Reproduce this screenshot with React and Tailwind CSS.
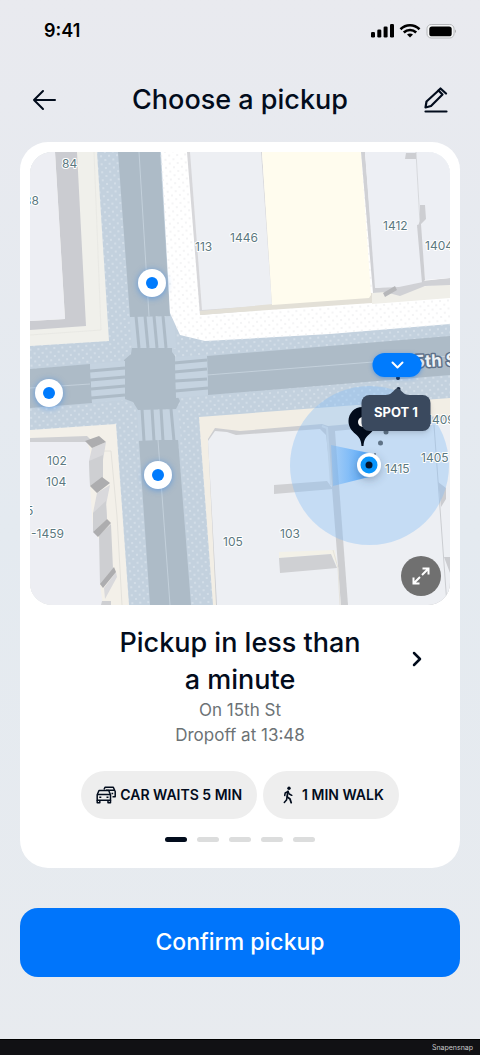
import { useState } from 'react';

const SPOTS = [
  { id: 2, x: 152, y: 282 },
  { id: 3, x: 49, y: 392 },
  { id: 4, x: 158, y: 474 }
];

const LABELS = [
  { text: '84', x: 62, y: 167 },
  { text: '38', x: 24, y: 204 },
  { text: '113', x: 195, y: 250 },
  { text: '1446', x: 230, y: 241 },
  { text: '1412', x: 383, y: 229 },
  { text: '1404', x: 425, y: 249 },
  { text: '102', x: 47, y: 464 },
  { text: '104', x: 46, y: 485 },
  { text: '5', x: 26, y: 514 },
  { text: '-1459', x: 31, y: 537 },
  { text: '105', x: 223, y: 545 },
  { text: '103', x: 280, y: 537 },
  { text: '1409', x: 427, y: 423 },
  { text: '1405', x: 421, y: 461 },
  { text: '1415', x: 385, y: 472 }
];

// map drawing space starts at (30, 151) and is 420 x 453
const place = (x, y) => ({ left: `${((x - 30) / 420) * 100}%`, top: `${((y - 151) / 453) * 100}%` });

function StatusBar() {
  return (
    <div className="flex items-center justify-between pl-11 pr-6 pt-[17px]">
      <span className="text-lg leading-7 font-semibold text-black">9:41</span>
      <svg className="w-[86px] h-4" viewBox="0 0 86 16" fill="#000" aria-hidden="true">
        <rect x="1" y="9" width="4" height="5.5" rx="1.3" />
        <rect x="7.3" y="6.5" width="4" height="8" rx="1.3" />
        <rect x="13.6" y="3.5" width="4" height="11" rx="1.3" />
        <rect x="20" y="1" width="4" height="13.5" rx="1.3" />
        <g fill="none" stroke="#000" strokeWidth="2.6">
          <path d="M30.5 6.2c5.4-5.2 13.6-5.2 19 0" />
          <path d="M33.8 9.5c3.5-3.4 8.9-3.4 12.4 0" />
        </g>
        <path d="M40 14.6l-3-3c1.7-1.5 4.3-1.5 6 0z" />
        <rect x="57" y="1.5" width="27" height="13.5" rx="4.2" fill="#f5f6f7" stroke="#b5b7ba" />
        <rect x="59.3" y="3.5" width="22.4" height="9.8" rx="2.6" />
        <path d="M85 6.5c1 .5 1 3 0 3.500z" fill="#999" />
      </svg>
    </div>
  );
}

function StreetMap() {
  return (
    <svg className="block w-full" viewBox="30 151 420 453" role="img" aria-label="Map of pickup spots near 15th St">
      <defs>
        <pattern id="paving" width="8" height="8" patternUnits="userSpaceOnUse" patternTransform="rotate(-4)">
          <circle cx="2" cy="2" r="0.8" fill="#e6edf4" />
          <circle cx="6" cy="6" r="0.8" fill="#e6edf4" />
        </pattern>
        <pattern id="plaza" width="8" height="8" patternUnits="userSpaceOnUse" patternTransform="rotate(-4)">
          <circle cx="2" cy="2" r="0.7" fill="#dfe1e4" />
          <circle cx="6" cy="6" r="0.7" fill="#dfe1e4" />
        </pattern>
        <linearGradient id="heading" x1="1" x2="0">
          <stop offset="0" stopColor="#2f95fa" stopOpacity="0.8" />
          <stop offset="1" stopColor="#6bb3fa" stopOpacity="0.35" />
        </linearGradient>
        <filter id="soft" x="-30%" y="-30%" width="160%" height="180%">
          <feDropShadow dx="0" dy="3" stdDeviation="4" floodColor="#3a4a5f" floodOpacity="0.35" />
        </filter>
      </defs>

      <rect x="30" y="151" width="420" height="453" fill="#c3d1de" />
      <rect x="30" y="151" width="420" height="453" fill="url(#paving)" />

      {/* roads */}
      <g fill="#adbbc7">
        <path d="M118 151H160L170 315 130 316z" />
        <path d="M30 368 90 363 92 402 30 407z" />
        <path d="M207 355 450 335V374L208 394z" />
        <path d="M139 440 178 438 191 604H150z" />
        <path d="M132 346H172L172 351 175 355 176 392 180 400 176 408 138 409 133 401 125 398 124 359 131 353z" />
      </g>
      <g stroke="#c3d0db" strokeWidth="1">
        <path d="M139 151 149 315" />
        <path d="M30 387 90 383" />
        <path d="M207 374 450 355" />
        <path d="M158 439 170 604" />
      </g>

      {/* crossings */}
      <path d="M130 316H174L176 347H132zM137 409H178L181 439H139zM90 363 125 360V399L92 402zM175 356 207 354 208 394 176 397z" fill="#c5d3e0" />
      <g stroke="#adbbc7" strokeWidth="3">
        <path d="M136 315 139 347M145 315 148 347M154 315 157 347M163 315 166 347" />
        <path d="M142 408 144 440M152 408 154 440M161 408 163 440M171 408 174 440" />
        <path d="M90 370 125 367M90 379 125 376M91 388 125 385M91 397 125 394" />
        <path d="M174 362 207 359M174 371 207 368M175 380 207 378M175 390 208 387" />
      </g>

      {/* north-west block */}
      <path d="M30 151H97L109 340 30 345z" fill="#f0f0eb" />
      <path d="M94 151 101 329 30 334" fill="none" stroke="#e5e5e1" strokeWidth="0.7" />
      <path d="M55 151H77L86 325 30 329V320L65 318z" fill="#cbccd1" />
      <path d="M30 151H55L65 318 30 320z" fill="#edeef3" />

      {/* north-east block */}
      <path d="M161 151H450V323L330 333 205 340 180 334 170 312z" fill="#fff" />
      <path d="M161 151H450V323L330 333 205 340 180 334 170 312z" fill="url(#plaza)" />
      <path d="M187 151H262L273 308 200 314z" fill="#d7d7da" />
      <path d="M190 151H261L272 304 202 309z" fill="#edeff3" />
      <path d="M273 303 372 292V302L240 311 200 314V310z" fill="#e3e0d7" />
      <path d="M372 292 450 282V297L372 303z" fill="#f0efe9" />
      <path d="M262 151H361L371 294 369 297 272 304z" fill="#fffcee" />
      <path d="M361 151H365L376 287 422 280 450 277V284L425 285 400 295 385 291 373 292z" fill="#d0d1d5" />
      <path d="M365 151H416L423 281 399 286 375 287z" fill="#edeff4" />
      <path d="M416 151H450V277L425 279 420 220z" fill="#edeff4" />
      <path d="M416 151 420 222 423 281" fill="none" stroke="#d6d8dc" />
      <path d="M417 224 421 223 425 279 422 282zM420 204H425L426 218 417 227 420 220zM406 152H416V158H405z" fill="#cdced2" />
      <path d="M383 292 395 285 397 289 385 296z" fill="#b6b7ba" />

      {/* south-west block */}
      <path d="M30 429 116 423 129 604H30z" fill="#f3f0e9" />
      <path d="M30 437 87 435 93 441H30z" fill="#cfd0d3" />
      <path d="M104 450 111 450 117 515 122 604" fill="none" stroke="#e4e2dc" />
      <path d="M30 441H87L90 450V485L93 528 100 540V584L103 604H30z" fill="#edeef3" />
      <path d="M92 447 106 441 103 459V477L90 485 89 460zM97 492 110 484 106 504 107 518 93 531V512zM104 587 116 571 117 576 105 598z" fill="#d9d9dc" />
      <path d="M89 460 103 454V477L90 485zM93 512 106 500 107 518 93 531zM99 534 111 523 113 568 100 584zM102 600 111 600V604H101z" fill="#cecfd2" />
      <path d="M85 440 99 435 106 441 92 447zM90 485 102 476 110 482 97 492zM93 531 107 518 111 522 98 536zM100 583 114 566 116 571 103 587z" fill="#adadaf" />

      {/* south-east block */}
      <path d="M199 416 450 397V604H213z" fill="#f2eee5" />
      <path d="M208 438 215 427 240 430 322 423 328 425 450 414V604H216z" fill="#cdced1" />
      <path d="M208 440 215 430 227 431 236 434 320 428 326 434 332 487 341 604H217z" fill="#edeff3" />
      <path d="M335 430 450 419V604H348z" fill="#edeff3" />
      <path d="M322 425 327 427 331 484" fill="none" stroke="#dedfe1" strokeWidth="2" />
      <path d="M274 484 327 480 333 488 274 493z" fill="#cfd0d3" />
      <path d="M279 551 335 549 338 567 331 553 279 557z" fill="#f3f1e8" />
      <path d="M279 557 331 553 337 567 280 572z" fill="#cfd0d3" />
      <path d="M333 549 338 567 340 604" fill="none" stroke="#e4e2dc" />
      <path d="M434 424 447 604" stroke="#cbcdd1" />
      <path d="M438 481 446 487V498L441 506zM444 556H450V572z" fill="#cbccd0" />

      {/* position accuracy and heading */}
      <circle cx="369.500" cy="464.500" r="79.500" fill="#83bdf6" fillOpacity="0.38" />
      <path d="M369 452 331 444 333 485 369 476z" fill="url(#heading)" />

      <g fontSize="12" fill="#5b7880" stroke="#fff" strokeWidth="2" strokeLinejoin="round" paintOrder="stroke">
        {LABELS.map((l) => (
          <text key={l.text} x={l.x} y={l.y}>{l.text}</text>
        ))}
      </g>
      <text x="407" y="367" fontSize="17" fontWeight="700" fill="#eef2f6" stroke="#5d7088" strokeWidth="3" strokeLinejoin="round" paintOrder="stroke" transform="rotate(-3 407 367)">15th St</text>

      {/* walking path and pin */}
      <g fill="#5f7387">
        <circle cx="386" cy="431" r="2.500" />
        <circle cx="380.500" cy="442" r="2.500" />
        <circle cx="375" cy="453" r="1" />
      </g>
      <circle cx="398" cy="377" r="2" fill="#16233a" />
      <circle cx="398.500" cy="388" r="2" fill="#16233a" />
      <path d="M362.500 406c-8 0-14 6.200-14 14 0 6 3 9.500 7 13 4 3.400 5.600 6 6 12h2c.4-6 2-8.600 6-12 4-3.500 7-7 7-13 0-7.800-6-14-14-14z" fill="#020c1c" />
      <circle cx="363" cy="421" r="5" fill="#fff" />
      <circle cx="369" cy="464" r="12" fill="#fff" filter="url(#soft)" />
      <circle cx="369" cy="464" r="8.500" fill="#0a95fb" />
      <circle cx="369" cy="464" r="3.500" fill="#04142b" />
    </svg>
  );
}

function MapPanel() {
  return (
    <div className="relative overflow-hidden rounded-[22px]">
      <StreetMap />
      {SPOTS.map((s) => (
        <button key={s.id} aria-label={`Spot ${s.id}`} style={place(s.x, s.y)} className="absolute -translate-x-1/2 -translate-y-1/2 size-7 rounded-full bg-white flex items-center justify-center shadow-[0_1px_6px_rgba(20,120,240,0.5)]">
          <span className="size-3 rounded-full bg-[#007bfd]" />
        </button>
      ))}
      <div style={place(396, 412)} className="absolute -translate-x-1/2 -translate-y-1/2 w-[69px] h-9 rounded-lg bg-[#3a495e] flex items-center justify-center text-white text-[13px] font-bold shadow-md">
        <svg className="absolute bottom-full left-6 w-6 h-[7px]" viewBox="0 0 24 7" fill="#3a495e" aria-hidden="true">
          <path d="M0 7C5 7 7 4 9.500 1.500 11 0 13 0 14.500 1.500 17 4 19 7 24 7z" />
        </svg>
        SPOT 1
      </div>
      <button aria-label="Show spot" style={place(397, 364)} className="absolute -translate-x-1/2 -translate-y-1/2 w-[49px] h-6 rounded-full bg-[#007bfd] flex items-center justify-center shadow-[0_1px_4px_rgba(20,120,240,0.5)]">
        <svg className="w-3.5 h-2" viewBox="0 0 14 8" fill="none" stroke="#fff" strokeWidth="2" strokeLinecap="round" strokeLinejoin="round">
          <path d="M2 1.500 7 6.500 12 1.500" />
        </svg>
      </button>
      <button aria-label="Expand map" className="absolute right-[9px] bottom-[9px] size-10 rounded-full bg-[#707070] flex items-center justify-center">
        <svg className="size-5" viewBox="0 0 20 20" fill="none" stroke="#fff" strokeWidth="2">
          <path d="M11.500 2.500H17.500V8.500M17 3 11 9M8.500 17.500H2.500V11.500M3 17 9 11" />
        </svg>
      </button>
    </div>
  );
}

function CarsIcon() {
  return (
    <svg className="w-5 h-[18px]" viewBox="0 0 20 18" fill="none" stroke="#020c1c" strokeWidth="1.500" strokeLinejoin="round" aria-hidden="true">
      <path d="M8 3.500 9 1.200H17.300L19.200 5.500V10.800H16.500" />
      <path d="M10 4.300H18.300M15.500 7.500H17.200" />
      <path d="M3 4.500H12.700L14.500 8.700V14.200H1.200V8.700z" />
      <path d="M1.500 8.500H14.500M3.300 11.300H5.300M10.500 11.300H12.500" />
      <path d="M1.200 14V16.700H3.800V14.500M12 14.500V16.700H14.500V14" />
    </svg>
  );
}

function WalkIcon() {
  return (
    <svg className="w-5 h-[18px]" viewBox="0 0 20 18" fill="none" stroke="#020c1c" strokeWidth="1.500" strokeLinecap="round" strokeLinejoin="round" aria-hidden="true">
      <circle cx="11" cy="2.300" r="1.700" fill="#020c1c" stroke="none" />
      <path d="M10 5.500 9 10.800 12 13 13.200 16.700" strokeWidth="1.800" />
      <path d="M9 11.500 8.500 14 6.300 16.500M6.700 9.500 7.200 7 10 5.500 11.300 8 13.800 9.300" />
    </svg>
  );
}

export default function App() {
  const [page, setPage] = useState(0);

  return (
    <div className="min-h-screen flex flex-col bg-linear-to-b from-[#e9eaef] via-[#e4eaf0] to-[#e8ebef] font-[Inter,sans-serif] text-[#020c1c]">
      <StatusBar />

      <header className="flex items-center justify-between px-8 pt-[34px] pb-[21px]">
        <button aria-label="Back">
          <svg className="size-6" viewBox="0 0 24 24" fill="none" stroke="currentColor" strokeWidth="2" strokeLinecap="round" strokeLinejoin="round">
            <path d="M23 12H2M11 3 2 12 11 21" />
          </svg>
        </button>
        <h1 className="text-[27px] leading-[42px] font-medium">Choose a pickup</h1>
        <button aria-label="Edit pickup">
          <svg className="w-6 h-[26px]" viewBox="0 0 24 26" fill="none" stroke="currentColor" strokeWidth="2.200" strokeLinecap="round" strokeLinejoin="round">
            <path d="M1.500 20.500 2.500 14.500 14.500 3.500 18.500 7.500 7 19z" />
            <path d="M14.500 3.500 16.500 1.500 22 6.500M1.500 24.500H22.500" />
          </svg>
        </button>
      </header>

      <main className="px-5">
        <section className="bg-white rounded-[28px] p-2.5 pb-[26px]">
          <MapPanel />

          <div className="grid grid-cols-[66px_1fr_66px] items-start pt-[19px] text-center">
            <div className="col-start-2">
              <h2 className="text-[27px] leading-[37px] font-medium">Pickup in less than<br />a minute</h2>
              <p className="text-[17px] leading-[25px] text-[#6c7275]">On 15th St<br />Dropoff at 13:48</p>
            </div>
            <button aria-label="Next spot" onClick={() => setPage((page + 1) % 5)} className="h-[70px] flex items-center justify-center">
              <svg className="w-2.5 h-4" viewBox="0 0 10 16" fill="none" stroke="currentColor" strokeWidth="2.500" strokeLinecap="round" strokeLinejoin="round">
                <path d="M2 2 8 8 2 14" />
              </svg>
            </button>
          </div>

          <div className="flex justify-center gap-1.5 pt-[23px] text-sm font-semibold">
            <span className="h-12 px-[15px] rounded-full bg-[#eee] flex items-center gap-1"><CarsIcon />CAR WAITS 5 MIN</span>
            <span className="h-12 px-[15px] rounded-full bg-[#eee] flex items-center gap-1"><WalkIcon />1 MIN WALK</span>
          </div>

          <div className="flex justify-center gap-2.5 pt-[18px]">
            {[0, 1, 2, 3, 4].map((i) => (
              <button key={i} aria-label={`Option ${i + 1}`} onClick={() => setPage(i)} className={i === page ? 'w-[22px] h-[5px] rounded-full bg-[#020c1c]' : 'w-[22px] h-[5px] rounded-full bg-[#dcdddd]'} />
            ))}
          </div>
        </section>

        <button className="mt-10 w-full h-[69px] rounded-[18px] bg-[#0075fb] text-white text-[23px] font-medium">Confirm pickup</button>
      </main>

      <footer className="mt-auto h-4 bg-[#111114] border-t border-black px-[7px] flex items-center justify-end text-[7px] leading-none text-[#c9c9cb]">Snapensnap</footer>
    </div>
  );
}
